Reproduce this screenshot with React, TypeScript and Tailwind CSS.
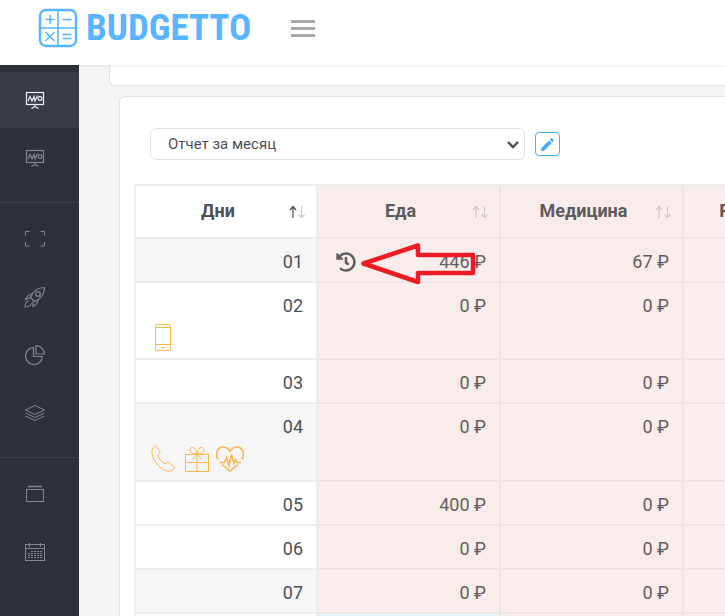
import React from "react";
import { FaHistory } from "react-icons/fa";
import { MdEdit } from "react-icons/md";

function Logo() {
  return (
    <a href="#" className="flex w-[215px] items-center gap-2 text-[#5ab4ff]">
      <svg width="40" height="40" viewBox="0 0 40 40" fill="none" stroke="currentColor" aria-hidden="true">
        <rect x="2" y="2" width="36" height="36" rx="6" strokeWidth="2.400" />
        <path d="M20 2v36M2 20h36" strokeWidth="1.600" />
        <path d="M12 7v9M7.500 11.500h9M24.500 11.500h9M7.500 24l9 9M16.500 24l-9 9M24.500 26.500h9M24.500 30.500h9" strokeWidth="1.500" />
      </svg>
      <span className="font-['Roboto_Condensed',Roboto,sans-serif] text-[37px] leading-10 font-bold">BUDGETTO</span>
    </a>
  );
}

function Board() {
  return (
    <svg width="20" height="20" viewBox="0 0 20 20" fill="none" stroke="currentColor">
      <rect x="1.500" y="2.500" width="17" height="12" strokeWidth="1.200" />
      <path d="M3 11l2-4.500 2 4.500 2-4.500 1 4.500 2.500-5.500M10 15v1.500M6.500 18.500l3.500-2 3.500 2" strokeWidth="1.200" />
      <circle cx="15" cy="8.500" r="1.900" strokeWidth="1.200" />
    </svg>
  );
}

function Frame() {
  return (
    <svg width="20" height="20" viewBox="0 0 20 20" fill="none" stroke="currentColor">
      <path d="M.5 6.500v-4h4M15.500 2.500h4v4M19.500 13v4h-4M4.500 17h-4v-4" />
    </svg>
  );
}

function Rocket() {
  return (
    <svg width="22" height="22" viewBox="0 0 22 22" fill="none" stroke="currentColor" strokeWidth="1.200">
      <path d="M20.500 1.500C14 1.500 9 5 6.500 11.500l4 4C17 13 20.500 8 20.500 1.500z" />
      <circle cx="14" cy="8" r="2.300" />
      <path d="M9 7.500C5.500 8 3 10 1.500 13.500l5-2M14.500 13c-.5 3.500-2.500 6-5.500 7.500v-5M5 14.500c-2.500.5-3.800 3-4 6.500 3.500-.2 6-1.500 6.500-4" />
    </svg>
  );
}

function Pie() {
  return (
    <svg width="20" height="20" viewBox="0 0 20 20" fill="none" stroke="currentColor" strokeWidth="1.200">
      <path d="M8.500 2.500v9h9A8.500 8.500 0 1 1 8.500 2.500z" />
      <path d="M11 .7v8.300h8.300A8.300 8.300 0 0 0 11 .7z" />
    </svg>
  );
}

function Layers() {
  return (
    <svg width="22" height="18" viewBox="0 0 22 18" fill="none" stroke="currentColor">
      <path d="M11 1.500l9.500 4.500-9.500 4.500L1.500 6zM1.500 9l9.500 4.500L20.500 9M1.500 12l9.500 4.500 9.500-4.500" />
    </svg>
  );
}

function Folder() {
  return (
    <svg width="20" height="18" viewBox="0 0 20 18" fill="none" stroke="currentColor">
      <path d="M3 1.500h14" strokeWidth="1.500" />
      <rect x="1.500" y="4.500" width="17" height="12" />
    </svg>
  );
}

function Calendar() {
  return (
    <svg width="22" height="20" viewBox="0 0 22 20" fill="none" stroke="currentColor">
      <rect x="1.500" y="2.500" width="19" height="16" />
      <path d="M1.500 6.500h19M5.500 1v4M16.500 1v4" />
      <path d="M7 9.500h12M4 11.500h15M4 13.500h15M4 15.500h15" strokeDasharray="2 1" />
    </svg>
  );
}

function Mobile() {
  return (
    <svg width="28" height="27" viewBox="-4 0 28 27" fill="none" stroke="currentColor">
      <rect x="1.500" y=".5" width="15" height="26" rx="1.500" />
      <path d="M1.500 3.500h15M1.500 20.500h15M7 23.500h4" />
    </svg>
  );
}

function Phone() {
  return (
    <svg width="28" height="28" viewBox="-1 0 28 28" fill="none" stroke="currentColor">
      <path d="M5.500 1.200l3.300 5.600c.4.700.2 1.400-.4 1.900L6.800 10c.9 3.700 3.600 7 7.200 8.800l1.900-1.300c.6-.4 1.200-.4 1.800 0l5 3.700c.7.500.8 1.200.4 1.900-1.600 2.500-4.300 3.700-7 2.800C8.500 23.600 2 16 1 8.500.6 5.300 1.800 2.700 4 1c.5-.4 1.100-.3 1.500.2z" />
    </svg>
  );
}

function Gift() {
  return (
    <svg width="28" height="28" viewBox="-1 0 28 28" fill="none" stroke="currentColor">
      <rect x="1.500" y="9.500" width="23" height="17" />
      <path d="M1.500 17.500h23M13 9.500v17M13 9l-4 5M13 9l4 5" />
      <path d="M12.500 9C9 9 6 7.500 6 5c0-4 6.500-4 6.500 4zM13.500 9C17 9 20 7.500 20 5c0-4-6.500-4-6.500 4z" />
    </svg>
  );
}

function HeartPulse() {
  return (
    <svg width="28" height="28" viewBox="1 0 28 28" fill="none" stroke="currentColor" strokeWidth="1.600">
      <path d="M3 14.500C-.5 8.500 3 2 8 2c3 0 5.500 1.500 7 4.500C16.500 3.500 19 2 22 2c5 0 8.500 6.500 5 12.500M7 19.500l8 6.500 8-6.500" />
      <path d="M4.500 17.500h5l2-5 2.500 8 2.500-11 2.500 9 1.500-4 1.500 3h4" />
    </svg>
  );
}

function SortArrows({ ascending = false }: { ascending?: boolean }) {
  return (
    <svg width="18" height="16" viewBox="0 0 18 16" fill="none" strokeWidth="1.200">
      <path d="M5 14V3M2 6l3-3.500L8 6" className={ascending ? "stroke-[#4b4d55]" : "stroke-[#d0c7c9]"} />
      <path d="M13.500 2v11.500M10.500 10.500l3 3 3-3" className="stroke-[#cfc9cb]" />
    </svg>
  );
}

function PointerArrow() {
  return (
    <svg className="pointer-events-none absolute top-0.5 left-10 z-10" width="120" height="44" viewBox="0 0 120 44" fill="none">
      <path
        d="M5.500 22.500L60 4.500v9.500h55v18H60v9z"
        stroke="#ed1c24"
        strokeWidth="4.500"
        strokeLinejoin="round"
      />
    </svg>
  );
}

const navGroups = [
  [
    { label: "Отчеты", icon: <Board />, active: true },
    { label: "Графики", icon: <Board />, active: false },
  ],
  [
    { label: "Обзор", icon: <Frame />, active: false },
    { label: "Цели", icon: <Rocket />, active: false },
    { label: "Статистика", icon: <Pie />, active: false },
    { label: "Категории", icon: <Layers />, active: false },
  ],
  [
    { label: "Счета", icon: <Folder />, active: false },
    { label: "Календарь", icon: <Calendar />, active: false },
  ],
];

function Sidebar() {
  return (
    <nav className="flex w-[79px] shrink-0 flex-col bg-[#2f3139] pt-[7px]">
      {navGroups.map((group, i) => (
        <div
          key={i}
          className={
            i === 0 ? "flex flex-col gap-0.5 pb-4" : "flex flex-col gap-0.5 border-t border-[#3d3f47] pt-2 pb-4"
          }
        >
          {group.map((item) => (
            <a
              key={item.label}
              href="#"
              aria-label={item.label}
              className={
                item.active
                  ? "flex h-14 items-center justify-center bg-[#3a3c45] pr-2.5 text-[#f0f0f2]"
                  : "flex h-14 items-center justify-center pr-2.5 text-[#85878e]"
              }
            >
              {item.icon}
            </a>
          ))}
        </div>
      ))}
    </nav>
  );
}

const columns = ["Дни", "Еда", "Медицина", "Рестораны"];

type Row = {
  day: string;
  values: (number | null)[];
  marks?: React.ReactNode;
  history?: boolean;
  today?: boolean;
};

const rows: Row[] = [
  { day: "01", values: [446, 67, null], history: true },
  { day: "02", values: [0, 0, null], marks: <Mobile /> },
  { day: "03", values: [0, 0, null] },
  { day: "04", values: [0, 0, null], marks: <><Phone /><Gift /><HeartPulse /></> },
  { day: "05", values: [400, 0, null] },
  { day: "06", values: [0, 0, null] },
  { day: "07", values: [0, 0, null] },
  { day: "", values: [null, null, null], today: true },
];

function ReportTable() {
  return (
    <table className="w-[733px] table-fixed border-separate border-spacing-0 border-t-2 border-l-2 border-[#ececec] text-lg leading-7 text-[#4d4f57]">
      <thead>
        <tr>
          {columns.map((name, i) => (
            <th
              key={name}
              scope="col"
              className={
                i === 0
                  ? "relative h-[53px] w-[182px] border-r-2 border-b-2 border-[#ececec] pr-[30px] pb-0.5 pl-3.5 font-bold"
                  : "relative h-[53px] border-r-2 border-b-2 border-[#efe4e4] bg-[#f9edeb] pr-[30px] pb-0.5 pl-3.5 font-bold text-[#5d5a5e]"
              }
            >
              {name}
              <span className="absolute top-[18px] right-2.5">
                <SortArrows ascending={i === 0} />
              </span>
            </th>
          ))}
        </tr>
      </thead>
      <tbody>
        {rows.map((row, r) => (
          <tr key={r} className={r % 3 === 0 ? "bg-[#f6f6f6]" : "bg-white"}>
            <td className="h-11 border-r-2 border-b-2 border-[#ececec] pt-[9px] pr-[13px] pb-[5px] pl-3.5 text-right align-top">
              {row.day}
              {row.marks && <div className="flex gap-[5px] pt-1 pb-0.5 text-[#fbb650]">{row.marks}</div>}
            </td>
            {row.values.map((value, c) => (
              <td
                key={c}
                className={
                  row.today && c === 0
                    ? "relative border-r-2 border-b-2 border-[#efe4e4] bg-[#e6f5fd]"
                    : "relative border-r-2 border-b-2 border-[#efe4e4] bg-[#f9edeb] pt-[9px] pr-[13px] pb-[5px] pl-3.5 text-right align-top text-[#605d60]"
                }
              >
                {row.history && c === 0 ? (
                  <div className="flex items-center justify-between pl-1">
                    <button type="button" aria-label="История">
                      <FaHistory size={20} />
                    </button>
                    <span>{value} ₽</span>
                    <PointerArrow />
                  </div>
                ) : (
                  value !== null && <>{value} ₽</>
                )}
              </td>
            ))}
          </tr>
        ))}
      </tbody>
    </table>
  );
}

export default function App() {
  return (
    <div className="flex h-screen flex-col overflow-hidden bg-[#f4f4f4] font-[Roboto,sans-serif]">
      <header className="z-10 flex h-[65px] shrink-0 items-center gap-[38px] bg-white pb-[9px] pl-[38px] shadow-[0_1px_2px_rgba(0,0,0,0.08)]">
        <Logo />
        <button type="button" aria-label="Меню" className="flex flex-col gap-1">
          <span className="h-[3px] w-6 bg-[#a9a9a9]" />
          <span className="h-[3px] w-6 bg-[#a9a9a9]" />
          <span className="h-[3px] w-6 bg-[#a9a9a9]" />
        </button>
      </header>
      <div className="flex min-h-0 flex-1">
        <Sidebar />
        <main className="min-w-0 flex-1 overflow-hidden pl-[30px]">
          <section className="h-[21px] rounded-bl-md border-b border-l border-[#e5e5e5] bg-white" />
          <section className="mt-2.5 ml-2.5 rounded-tl-md border-t border-l border-[#e5e5e5] bg-white pt-[31px] pl-3.5">
            <div className="mb-6 flex items-center gap-2.5 pl-4">
              <div className="relative">
                <select
                  aria-label="Период отчета"
                  className="h-8 w-[375px] appearance-none rounded-md border border-[#e2e2e2] bg-white px-[17px] text-[15px] text-[#4d4f57]"
                >
                  <option>Отчет за месяц</option>
                </select>
                <svg
                  className="pointer-events-none absolute top-3 right-[5px] text-[#4d4f57]"
                  width="14"
                  height="10"
                  viewBox="0 0 14 10"
                  fill="none"
                  stroke="currentColor"
                  strokeWidth="2.400"
                >
                  <path d="M2 2l5 5 5-5" />
                </svg>
              </div>
              <button
                type="button"
                aria-label="Редактировать"
                className="flex h-6 w-[25px] items-center justify-center rounded border border-[#48abf7] text-[#48abf7]"
              >
                <MdEdit size={17} />
              </button>
            </div>
            <ReportTable />
          </section>
        </main>
      </div>
    </div>
  );
}
